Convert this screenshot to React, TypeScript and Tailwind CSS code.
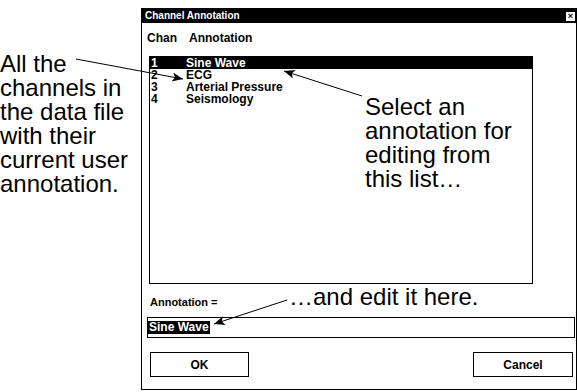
const UI = "font-['Liberation_Sans',Arial,sans-serif]";

const channels = [
  { n: "1", name: "Sine Wave" },
  { n: "2", name: "ECG" },
  { n: "3", name: "Arterial Pressure" },
  { n: "4", name: "Seismology" },
];

// callout arrows drawn over the dialog
function Arrows() {
  return (
    <svg className="absolute inset-0 pointer-events-none" width="577" height="392" viewBox="0 0 577 392">
      <defs>
        <marker id="head" viewBox="0 0 12 10" refX="12" refY="5" markerWidth="13" markerHeight="9" orient="auto" markerUnits="userSpaceOnUse">
          <path d="M0 0 L12 5 L0 10 L3 5 Z" fill="#000" />
        </marker>
      </defs>
      <line x1="76" y1="59" x2="183" y2="79" stroke="#000" strokeWidth="1" markerEnd="url(#head)" />
      <line x1="362" y1="96" x2="284" y2="71" stroke="#000" strokeWidth="1" markerEnd="url(#head)" />
      <line x1="287" y1="300" x2="214" y2="324" stroke="#000" strokeWidth="1" markerEnd="url(#head)" />
    </svg>
  );
}

export default function App() {
  return (
    <div className={`relative w-[577px] h-[392px] bg-white overflow-hidden flex ${UI}`}>
      {/* left callout */}
      <div className="w-[141px] shrink-0 pt-[52px] text-[24px] leading-[24px] text-black whitespace-nowrap">
        All the
        <br />
        channels in
        <br />
        the data file
        <br />
        with their
        <br />
        current user
        <br />
        annotation.
      </div>

      {/* dialog */}
      <div className="mt-[8px] w-[436px] h-[382px] border border-black flex flex-col font-bold text-black">
        <div className="h-[14px] bg-black text-white flex items-center justify-between pl-[3px] pr-px text-[10px] leading-none">
          <span>Channel Annotation</span>
          <span className="w-[9px] h-[9px] bg-white text-black text-[9px] flex items-center justify-center leading-none">×</span>
        </div>

        <div className="mt-[9px] ml-[5px] flex gap-[12px] text-[12px] leading-[12px]">
          <span>Chan</span>
          <span>Annotation</span>
        </div>

        <div className="mt-[12px] ml-[7px] w-[384px] h-[228px] border border-black text-[12px]">
          {channels.map((c, i) => (
            <div key={c.n} className={`h-[12px] flex items-center leading-[12px] ${i === 0 ? "bg-black text-white" : ""}`}>
              <span className="w-[36px] pl-[1px]">{c.n}</span>
              <span>{c.name}</span>
            </div>
          ))}
        </div>

        <div className="mt-[13px] ml-[8px] text-[11px] leading-[11px]">Annotation =</div>

        <div className="mt-[9px] ml-[5px] w-[428px] h-[21px] border border-black flex items-center text-[12px]">
          <span className="bg-black text-white px-px leading-[13px]">Sine Wave</span>
        </div>

        <div className="mt-[14px] ml-[8px] mr-[3px] flex justify-between">
          <button className="w-[99px] h-[25px] border border-black text-[12px] font-bold">OK</button>
          <button className="w-[100px] h-[25px] border border-black text-[12px] font-bold">Cancel</button>
        </div>
      </div>

      {/* callouts over the dialog */}
      <div className="absolute left-[365px] top-[95px] text-[24px] leading-[24px] text-black whitespace-nowrap">
        Select an
        <br />
        annotation for
        <br />
        editing from
        <br />
        this list…
      </div>
      <div className="absolute left-[289px] top-[285px] text-[24px] leading-[24px] text-black whitespace-nowrap">
        …and edit it here.
      </div>

      <Arrows />
    </div>
  );
}
